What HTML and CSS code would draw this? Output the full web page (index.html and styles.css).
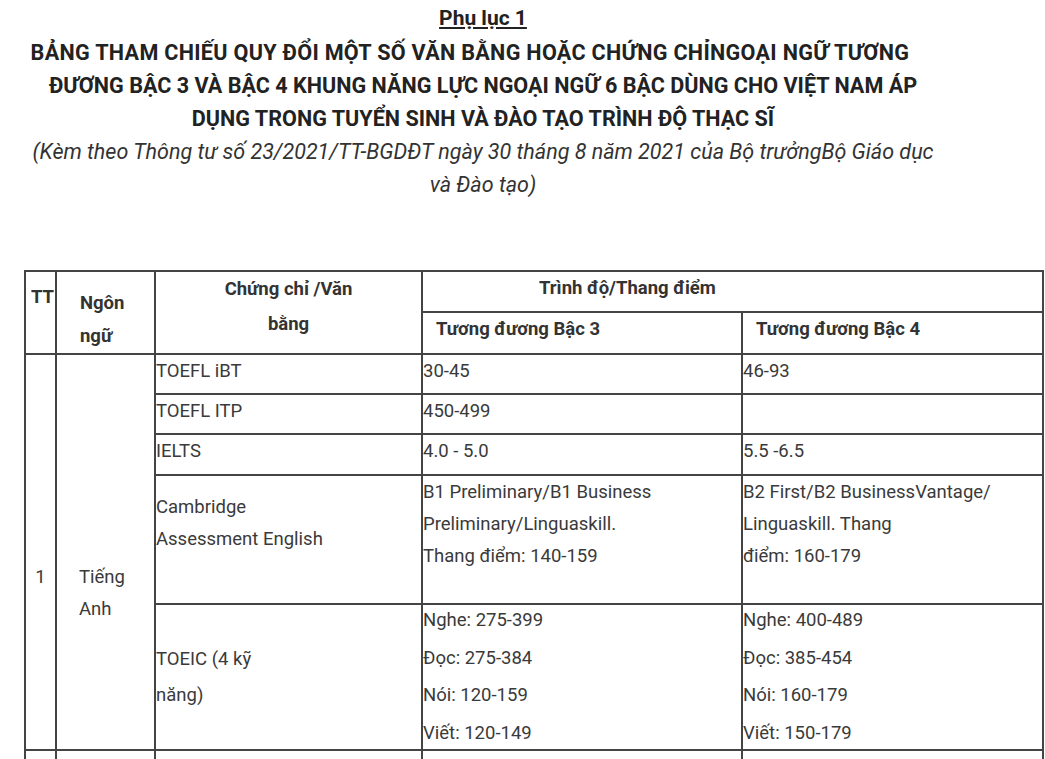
FILE: index.html
```html
<!DOCTYPE html>
<html lang="vi">
<head>
<meta charset="utf-8">
<title>Phụ lục 1</title>
<link rel="stylesheet" href="styles.css">
</head>
<body>
<div class="doc">
  <p class="appendix"><u>Phụ lục 1</u></p>
  <h1 class="title"><span class="first-line">BẢNG THAM CHIẾU QUY ĐỔI MỘT SỐ VĂN BẰNG HOẶC CHỨNG CHỈNGOẠI NGỮ TƯƠNG</span><br>ĐƯƠNG BẬC 3 VÀ BẬC 4 KHUNG NĂNG LỰC NGOẠI NGỮ 6 BẬC DÙNG CHO VIỆT NAM ÁP<br>DỤNG TRONG TUYỂN SINH VÀ ĐÀO TẠO TRÌNH ĐỘ THẠC SĨ</h1>
  <p class="subtitle">(Kèm theo Thông tư số 23/2021/TT-BGDĐT ngày 30 tháng 8 năm 2021 của Bộ trưởngBộ Giáo dục<br>và Đào tạo)</p>
</div>
<table class="grid">
  <colgroup>
    <col class="c-tt"><col class="c-lang"><col class="c-cert"><col class="c-b3"><col class="c-b4">
  </colgroup>
  <tr class="h1row">
    <th rowspan="2" class="th-tt">TT</th>
    <th rowspan="2" class="th-lang">Ngôn<br>ngữ</th>
    <th rowspan="2" class="th-cert">Chứng chỉ /Văn<br>bằng</th>
    <th colspan="2" class="th-level">Trình độ/Thang điểm</th>
  </tr>
  <tr class="h2row">
    <th class="th-sub">Tương đương Bậc 3</th>
    <th class="th-sub">Tương đương Bậc 4</th>
  </tr>
  <tr class="r-short">
    <td rowspan="5" class="td-tt">1</td>
    <td rowspan="5" class="td-lang">Tiếng<br>Anh</td>
    <td>TOEFL iBT</td>
    <td>30-45</td>
    <td>46-93</td>
  </tr>
  <tr class="r-short">
    <td>TOEFL ITP</td>
    <td>450-499</td>
    <td></td>
  </tr>
  <tr class="r-short r-ielts">
    <td>IELTS</td>
    <td>4.0 - 5.0</td>
    <td>5.5 -6.5</td>
  </tr>
  <tr class="r-cam">
    <td class="td-cam">Cambridge<br>Assessment English</td>
    <td>B1 Preliminary/B1 Business<br>Preliminary/Linguaskill.<br>Thang điểm: 140-159</td>
    <td>B2 First/B2 BusinessVantage/<br>Linguaskill. Thang<br>điểm: 160-179</td>
  </tr>
  <tr class="r-toeic">
    <td class="td-toeic">TOEIC (4 kỹ<br>năng)</td>
    <td class="td-skills">
      <div class="skill">Nghe: 275-399</div>
      <div class="skill">Đọc: 275-384</div>
      <div class="skill">Nói: 120-159</div>
      <div class="skill">Viết: 120-149</div>
    </td>
    <td class="td-skills">
      <div class="skill">Nghe: 400-489</div>
      <div class="skill">Đọc: 385-454</div>
      <div class="skill">Nói: 160-179</div>
      <div class="skill">Viết: 150-179</div>
    </td>
  </tr>
  <tr class="r-next">
    <td></td><td></td><td></td><td></td><td></td>
  </tr>
</table>
</body>
</html>
```
FILE: styles.css
```css
html, body {
  margin: 0;
  padding: 0;
  background: #ffffff;
  overflow: hidden;
}
body {
  font-family: Roboto, "Noto Sans", "Liberation Sans", sans-serif;
  color: #333333;
}
.doc {
  width: 966px;
  text-align: center;
}
.appendix {
  margin: 0;
  font-size: 21px;
  font-weight: 700;
  line-height: 36px;
  color: #222222;
}
.title {
  margin: 0;
  font-size: 21.6px;
  font-weight: 700;
  line-height: 33px;
  color: #222222;
}
.first-line {
  margin-right: 26px;
  letter-spacing: 0.3px;
}
.subtitle {
  margin: 0;
  font-size: 21.5px;
  font-style: italic;
  line-height: 33px;
  color: #333333;
}
.grid {
  margin: 69px 0 0 24px;
  width: 1018px;
  table-layout: fixed;
  border-collapse: collapse;
  font-size: 18.5px;
  color: #3a3a3a;
}
.c-tt { width: 31px; }
.c-lang { width: 99px; }
.c-cert { width: 267px; }
.c-b3 { width: 320px; }
.c-b4 { width: 301px; }
.grid th, .grid td {
  border: 2px solid #444444;
  padding: 0;
  vertical-align: top;
  text-align: left;
  line-height: 32px;
}
.grid th {
  font-weight: 700;
  color: #333333;
}
.h1row { height: 40px; }
.h2row { height: 41px; }
.grid .th-tt { padding-top: 9px; padding-left: 5px; white-space: nowrap; }
.grid .th-lang { padding-top: 15px; padding-left: 23px; line-height: 33px; }
.grid .th-cert { text-align: center; line-height: 35px; }
.grid .th-level { padding-left: 116px; }
.grid .th-sub { padding-left: 13px; }
.r-short { height: 40px; }
.r-ielts { height: 41px; }
.r-cam { height: 129px; }
.r-toeic { height: 146px; }
.r-next { height: 10px; }
.grid .td-tt { padding-top: 206px; text-align: center; }
.grid .td-lang { padding-top: 206px; padding-left: 22px; }
.grid .td-cam { padding-top: 15px; }
.grid .td-toeic { vertical-align: middle; line-height: 36px; }
.grid .td-skills { padding-top: 0; }
.skill { line-height: 30px; margin-bottom: 7.5px; }
.skill:last-child { margin-bottom: 0; }
```
